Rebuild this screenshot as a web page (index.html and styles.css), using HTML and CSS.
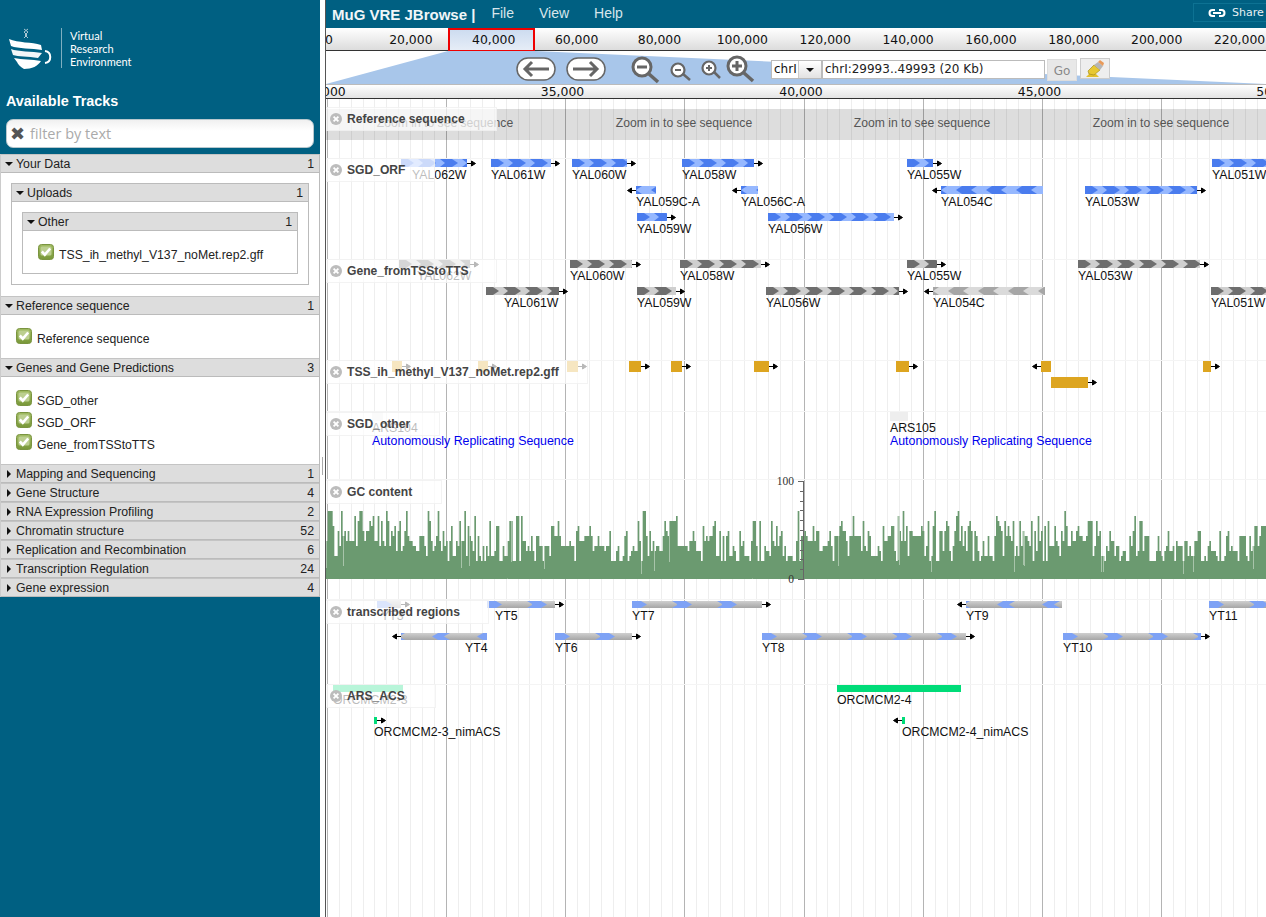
FILE: index.html
```html
<!DOCTYPE html>
<html lang="en">

<head>
    <meta charset="UTF-8" />
    <title>MuG VRE JBrowse</title>
    <link rel="stylesheet" href="styles.css">
</head>

<body>
    <svg class="defs" width="0" height="0">
        <defs>
            <pattern id="orf-r" patternUnits="userSpaceOnUse" width="22" height="8">
                <rect width="22" height="8" fill="#96b8ff" />
                <path d="M0 0H7L13 4 7 8H0ZM17 0H22V8H17L22 4Z" fill="#4a7cee" />
            </pattern>
            <pattern id="orf-l" patternUnits="userSpaceOnUse" width="30" height="8">
                <rect width="30" height="8" fill="#96b8ff" />
                <path d="M21 0L15 4 21 8H30V0ZM0 0H6L0 4 6 8H0Z" fill="#4a7cee" />
            </pattern>
            <pattern id="gene-r" patternUnits="userSpaceOnUse" width="22" height="8">
                <rect width="22" height="8" fill="#cfcfcf" />
                <path d="M0 0H7L13 4 7 8H0ZM17 0H22V8H17L22 4Z" fill="#6e6e6e" />
            </pattern>
            <pattern id="gene-l" patternUnits="userSpaceOnUse" width="30" height="8">
                <rect width="30" height="8" fill="#dadada" />
                <path d="M21 0L15 4 21 8H30V0ZM0 0H6L0 4 6 8H0Z" fill="#a6a6a6" />
            </pattern>
            <linearGradient id="tr-grey" x1="0" y1="0" x2="0" y2="1">
                <stop offset="0" stop-color="#cfcfcf" />
                <stop offset="1" stop-color="#a6a6a6" />
            </linearGradient>
            <pattern id="tr-r" patternUnits="userSpaceOnUse" width="45" height="7">
                <path d="M0 0H9L15 3.5 9 7H0ZM40 0H45V2.900ZM40 7H45V4.100Z" fill="#7ea2f5" />
            </pattern>
            <pattern id="tr-l" patternUnits="userSpaceOnUse" width="45" height="7">
                <path d="M37 0L31 3.500 37 7H45V4.670L43 3.500 45 2.330V0ZM0 0H4L0 2.330ZM0 7H4L0 4.670Z" fill="#7ea2f5" />
            </pattern>
            <linearGradient id="check-green" x1="0" y1="0" x2="0" y2="1">
                <stop offset="0" stop-color="#a2bc64" />
                <stop offset="1" stop-color="#789738" />
            </linearGradient>
            <symbol id="check" viewBox="0 0 16 16">
                <rect x="0.500" y="0.500" width="15" height="15" rx="3" fill="url(#check-green)" stroke="#7a9440" />
                <rect x="2.500" y="2.500" width="11" height="9" rx="1.500" fill="#bccf90" />
                <path d="M3.800 7.500l3 3.200 5.400-6.200" fill="none" stroke="#fff" stroke-width="2.600" />
            </symbol>
            <symbol id="close" viewBox="0 0 12 12">
                <circle cx="6" cy="6" r="6" fill="#bcbcbc" />
                <path d="M3.600 3.600l4.800 4.800M8.400 3.600l-4.800 4.800" stroke="#fff" stroke-width="1.800" />
            </symbol>
        </defs>
    </svg>

    <div class="page">
        <aside class="sidebar">
            <div class="logo">
                <svg class="logo-mark" width="46" height="44" viewBox="0 0 46 44">
                    <path d="M1 11C10 15 24 14 33 17L34 22C24 20 10 21 3 18Z" fill="#fff" />
                    <path d="M3 21C10 24 24 23 34 25L30 30C20 28 10 29 5 27Z" fill="#f2f6f8" />
                    <path d="M6 30C14 32 24 31 33 33 30 38 24 41 16 41 12 39 10 36 9 34Z" fill="#fff" />
                    <path d="M37 23C44 24 44 34 37 35" fill="none" stroke="#fff" stroke-width="2" />
                    <path d="M16 1l4 3-3 3 3 3M20 1l-4 3 3 3-3 3" fill="none" stroke="#a9c6d2" stroke-width="1" />
                </svg>
                <span class="logo-rule"></span>
                <div class="logo-text">Virtual<br>Research<br>Environment</div>
            </div>
            <h2 class="tracks-title">Available Tracks</h2>
            <div class="filter">
                <span class="filter-x">✖</span>
                <span class="filter-text">filter by text</span>
            </div>

            <div class="cat">
                <div class="cat-head"><i class="tri down"></i><span>Your Data</span><b>1</b></div>
                <div class="cat-body nested outer">
                    <div class="cat boxed">
                        <div class="cat-head"><i class="tri down"></i><span>Uploads</span><b>1</b></div>
                        <div class="cat-body nested">
                            <div class="cat boxed">
                                <div class="cat-head"><i class="tri down"></i><span>Other</span><b>1</b></div>
                                <div class="cat-body items deep">
                                    <label class="item"><svg width="16" height="16"><use href="#check" /></svg><span class="long">TSS_ih_methyl_V137_noMet.rep2.gff</span></label>
                                </div>
                            </div>
                        </div>
                    </div>
                </div>
            </div>
            <div class="cat">
                <div class="cat-head"><i class="tri down"></i><span>Reference sequence</span><b>1</b></div>
                <div class="cat-body items">
                    <label class="item"><svg width="16" height="16"><use href="#check" /></svg><span>Reference sequence</span></label>
                </div>
            </div>
            <div class="cat">
                <div class="cat-head"><i class="tri down"></i><span>Genes and Gene Predictions</span><b>3</b></div>
                <div class="cat-body items">
                    <label class="item"><svg width="16" height="16"><use href="#check" /></svg><span>SGD_other</span></label>
                    <label class="item"><svg width="16" height="16"><use href="#check" /></svg><span>SGD_ORF</span></label>
                    <label class="item"><svg width="16" height="16"><use href="#check" /></svg><span>Gene_fromTSStoTTS</span></label>
                </div>
            </div>
            <div class="cat"><div class="cat-head"><i class="tri right"></i><span>Mapping and Sequencing</span><b>1</b></div></div>
            <div class="cat"><div class="cat-head"><i class="tri right"></i><span>Gene Structure</span><b>4</b></div></div>
            <div class="cat"><div class="cat-head"><i class="tri right"></i><span>RNA Expression Profiling</span><b>2</b></div></div>
            <div class="cat"><div class="cat-head"><i class="tri right"></i><span>Chromatin structure</span><b>52</b></div></div>
            <div class="cat"><div class="cat-head"><i class="tri right"></i><span>Replication and Recombination</span><b>6</b></div></div>
            <div class="cat"><div class="cat-head"><i class="tri right"></i><span>Transcription Regulation</span><b>24</b></div></div>
            <div class="cat"><div class="cat-head"><i class="tri right"></i><span>Gene expression</span><b>4</b></div></div>
        </aside>

        <div class="splitter"><span class="grip"></span></div>

        <main class="main">
            <header class="menubar">
                <span class="brand">MuG VRE JBrowse |</span>
                <nav class="menu">
                    <span>File</span>
                    <span>View</span>
                    <span>Help</span>
                </nav>
                <div class="share">
                    <svg width="18" height="10" viewBox="0 0 18 10">
                        <path d="M7 2H4.500a3 3 0 0 0 0 6H7M11 2h2.500a3 3 0 0 1 0 6H11M5 5h8" fill="none" stroke="#fff" stroke-width="2" />
                    </svg>
                    <span>Share</span>
                </div>
            </header>

            <div class="overview">
                <div class="overview-scale" id="overviewScale"></div>
                <div class="overview-pos"></div>
            </div>

            <div class="navbar">
                <svg class="trapezoid" width="940" height="33">
                    <polygon points="0,33 122,0 209,0 940,33" fill="#a8c6ea" />
                </svg>
                <svg class="nav-arrow" width="40" height="24" viewBox="0 0 40 24">
                    <rect x="1" y="1" width="38" height="22" rx="11" fill="#fff" stroke="#666" stroke-width="1.500" />
                    <path d="M33 12H9M16 5l-7 7 7 7" fill="none" stroke="#666" stroke-width="3" />
                </svg>
                <svg class="nav-arrow next" width="40" height="24" viewBox="0 0 40 24">
                    <rect x="1" y="1" width="38" height="22" rx="11" fill="#fff" stroke="#666" stroke-width="1.500" />
                    <path d="M7 12H31M24 5l7 7-7 7" fill="none" stroke="#666" stroke-width="3" />
                </svg>
                <svg class="zoom-big-out" width="29" height="28" viewBox="0 0 29 28">
                    <circle cx="11" cy="11" r="9" fill="#fff" stroke="#666" stroke-width="3" />
                    <path d="M18 18l9 8" stroke="#666" stroke-width="3.500" />
                    <path d="M6 11h10" stroke="#666" stroke-width="3" />
                </svg>
                <svg class="zoom-small-out" width="21" height="19" viewBox="0 0 21 19">
                    <circle cx="8" cy="8" r="6.500" fill="#fff" stroke="#666" stroke-width="2.200" />
                    <path d="M13 12l7 6" stroke="#666" stroke-width="2.500" />
                    <path d="M5 8h6" stroke="#666" stroke-width="2" />
                </svg>
                <svg class="zoom-small-in" width="20" height="19" viewBox="0 0 20 19">
                    <circle cx="8" cy="8" r="6.500" fill="#fff" stroke="#666" stroke-width="2.200" />
                    <path d="M13 12l6 6" stroke="#666" stroke-width="2.500" />
                    <path d="M5 8h6M8 5v6" stroke="#666" stroke-width="2" />
                </svg>
                <svg class="zoom-big-in" width="29" height="28" viewBox="0 0 29 28">
                    <circle cx="11" cy="11" r="9" fill="#fff" stroke="#666" stroke-width="3" />
                    <path d="M18 18l9 8" stroke="#666" stroke-width="3.500" />
                    <path d="M6 11h10M11 6v10" stroke="#666" stroke-width="3" />
                </svg>
                <div class="chrom">
                    <span class="chrom-name">chrI</span>
                    <span class="chrom-drop"><i class="tri down"></i></span>
                </div>
                <div class="location">chrI:29993..49993 (20 Kb)</div>
                <div class="go">Go</div>
                <div class="highlight">
                    <svg width="22" height="18" viewBox="0 0 22 18">
                        <path d="M2 17h13l-3-3H5z" fill="#e3c02c" />
                        <path d="M5 14l-1-3 6-6 6 5-6 5z" fill="#e8c832" stroke="#a88f1c" stroke-width="0.700" />
                        <path d="M10 5l4-3 5 4-3 4z" fill="#b5b5b5" />
                        <path d="M14 2l2-2 4 3-1 3z" fill="#e89a5a" />
                    </svg>
                </div>
            </div>

            <div class="detail-scale" id="detailScale"></div>

            <div class="tracks" id="tracks"></div>
        </main>
    </div>

    <script src="script.js"></script>
</body>

</html>
```

FILE: styles.css
```css
*,
::after,
::before {
    box-sizing: border-box;
    padding: 0;
    margin: 0;
}

body {
    width: 100vw;
    height: 100vh;
    overflow: hidden;
    background-color: white;
    font-family: "Liberation Sans", Arial, sans-serif;
    font-size: 12px;
    color: #111;
}

.defs {
    position: absolute;
}

.page {
    display: flex;
    height: 917px;
}

/* left panel */

.sidebar {
    width: 320px;
    flex: none;
    background-color: #006082;
}

.logo {
    display: flex;
    align-items: flex-start;
    height: 91px;
    padding: 27px 0 0 8px;
}

.logo-mark {
    margin-top: 1px;
}

.logo-rule {
    width: 1px;
    height: 40px;
    margin: 1px 0 0 7px;
    background-color: #7fafc0;
}

.logo-text {
    margin: 2px 0 0 8px;
    font-family: Lato, sans-serif;
    font-size: 11px;
    line-height: 13px;
    color: white;
}

.tracks-title {
    height: 28px;
    padding: 2px 0 0 6px;
    font-size: 14.400px;
    line-height: 17px;
    color: white;
}

.filter {
    display: flex;
    align-items: center;
    height: 29px;
    margin: 0 6px;
    padding-left: 3px;
    border: 1px solid #b8c8ce;
    border-radius: 7px;
    background: linear-gradient(#f0f0f0, #fff 40%);
}

.filter-x {
    width: 20px;
    font-family: "DejaVu Sans", sans-serif;
    font-size: 18px;
    line-height: 18px;
    color: #555;
}

.filter-text {
    font-family: "Open Sans", sans-serif;
    font-size: 14.500px;
    color: #aaa;
}

.cat {
    background-color: white;
    border-right: 1px solid #bbb;
    border-left: 1px solid #ccc;
}

.filter + .cat {
    margin-top: 6px;
}

.cat-head {
    display: flex;
    align-items: center;
    height: 19px;
    padding: 0 5px 0 4px;
    background-color: #ddd;
    border-top: 1px solid #c4c4c4;
    border-bottom: 1px solid #bbb;
    font-size: 12.300px;
}

.cat-head span {
    flex: 1;
    margin-left: 3px;
    color: #222;
}

.cat-head b {
    font-weight: normal;
    color: #222;
}

.tri {
    display: inline-block;
    width: 0;
    height: 0;
    flex: none;
}

.tri.down {
    border-top: 4px solid #111;
    border-right: 4px solid transparent;
    border-left: 4px solid transparent;
}

.tri.right {
    margin-left: 2px;
    margin-right: 2px;
    border-top: 4px solid transparent;
    border-bottom: 4px solid transparent;
    border-left: 4px solid #111;
}

.cat-body.nested {
    padding: 10px;
}

.cat-body.nested.outer {
    padding-bottom: 11px;
}

.cat.boxed {
    border: 1px solid #bbb;
}

.cat.boxed > .cat-head {
    height: 18px;
    border-top: 0;
}

.cat-body.items {
    display: flex;
    flex-direction: column;
    gap: 6px;
    padding: 13px 0 14px 15px;
}

.cat-body.items.deep {
    padding: 13px 0 13px 15px;
}

.item {
    display: flex;
    align-items: flex-start;
    height: 16px;
    font-size: 12.200px;
    color: #222;
}

.item span {
    margin: 4px 0 0 5px;
}

.item .long {
    font-size: 12.250px;
}

.splitter {
    position: relative;
    width: 6px;
    flex: none;
    border-right: 1px solid #555;
}

.grip {
    position: absolute;
    top: 457px;
    left: 2px;
    width: 1px;
    height: 18px;
    background-color: #aaa;
}

/* main view */

.main {
    position: relative;
    flex: 1;
    min-width: 0;
    overflow: hidden;
}

.menubar {
    display: flex;
    align-items: center;
    height: 28px;
    background-color: #006082;
    color: white;
}

.brand {
    margin-left: 6px;
    font-size: 15px;
    font-weight: bold;
    color: #f0f6f8;
}

.menu {
    display: flex;
    gap: 25px;
    margin-left: 16px;
    margin-top: -2px;
    font-size: 14px;
    color: #d8e6ec;
}

.share {
    display: flex;
    align-items: center;
    gap: 6px;
    height: 19px;
    margin: -3px -1px 0 auto;
    padding-left: 14px;
    width: 74px;
    border: 1px solid #0d7293;
    font-family: "DejaVu Sans", sans-serif;
    font-size: 11px;
    white-space: nowrap;
    color: #e8f0f3;
}

.overview {
    position: relative;
    height: 23px;
    background: linear-gradient(white, #dcdcdc);
    border-bottom: 1px solid #333;
}

.overview-scale {
    position: relative;
    z-index: 1;
    display: flex;
    height: 22px;
    margin-left: -37.400px;
    white-space: nowrap;
}

.overview-scale span {
    width: 82.880px;
    flex: none;
    font-family: "DejaVu Sans", sans-serif;
    font-size: 12.400px;
    line-height: 23px;
    text-align: center;
    color: #111;
}

.overview-scale span:first-child {
    width: 80.800px;
}

.overview-pos {
    position: absolute;
    top: 0;
    left: 122px;
    width: 87px;
    height: 24px;
    border: 2px solid #e00;
    background: linear-gradient(#cddcf0, #e6edf7);
}

.navbar {
    position: relative;
    display: flex;
    align-items: flex-start;
    height: 33px;
}

.trapezoid {
    position: absolute;
    top: 0;
    left: 0;
}

.navbar > *:not(.trapezoid) {
    position: relative;
}

.nav-arrow {
    margin: 6px 0 0 190px;
}

.nav-arrow.next {
    margin-left: 10px;
}

.zoom-big-out {
    margin: 5px 0 0 25px;
}

.zoom-small-out {
    margin: 11px 0 0 10px;
}

.zoom-small-in {
    margin: 9px 0 0 10px;
}

.zoom-big-in {
    margin: 4px 0 0 5px;
}

.chrom {
    display: flex;
    height: 19px;
    margin: 9px 0 0 16px;
    background-color: white;
    border: 1px solid #bbb;
    font-family: "DejaVu Sans", sans-serif;
}

.chrom-name {
    width: 27px;
    padding-left: 2px;
    line-height: 17px;
    border-right: 1px solid #ccc;
}

.chrom-drop {
    display: flex;
    align-items: center;
    justify-content: center;
    width: 22px;
    background: linear-gradient(white, #e2e2e2);
}

.location {
    width: 223px;
    height: 19px;
    margin: 9px 0 0 0;
    padding-left: 2px;
    background-color: white;
    border: 1px solid #bbb;
    font-family: "DejaVu Sans", sans-serif;
    line-height: 16px;
    color: #222;
}

.go {
    width: 30px;
    height: 22px;
    margin: 8px 0 0 2px;
    background-color: #e8e8e8;
    border: 1px solid #ddd;
    font-family: "DejaVu Sans", sans-serif;
    line-height: 22px;
    text-align: center;
    color: #888;
}

.highlight {
    display: flex;
    align-items: center;
    justify-content: center;
    width: 30px;
    height: 21px;
    margin: 7px 0 0 3px;
    background-color: #eee;
    border: 1px solid #ccc;
}

.detail-scale {
    display: flex;
    height: 15px;
    margin-left: -121.250px;
    background: linear-gradient(white, #e4e4e4);
    border-top: 1px solid #bbb;
    border-bottom: 1px solid #333;
    white-space: nowrap;
}

.detail-scale span {
    width: 238.500px;
    flex: none;
    font-family: "DejaVu Sans", sans-serif;
    font-size: 12.400px;
    line-height: 13px;
    text-align: center;
    color: #111;
}

/* tracks */

.tracks {
    position: relative;
    height: 818px;
    overflow: hidden;
}

.grid-line {
    position: absolute;
    top: 0;
    bottom: 0;
    width: 1px;
    background-color: #eee;
}

.grid-line.major {
    background-color: #b4b4b4;
}

.seq-band {
    position: absolute;
    top: 10px;
    left: 0;
    right: 0;
    height: 31px;
    background-color: rgba(0, 0, 0, 0.133);
}

.seq-text {
    position: absolute;
    width: 238px;
    text-align: center;
    font-size: 12.150px;
    color: #555;
}

.divider {
    position: absolute;
    left: 0;
    right: 0;
    height: 1px;
    background-color: #f4f4f4;
}

.bar {
    position: absolute;
    display: block;
}

.strand {
    position: absolute;
    display: block;
}

.flabel {
    position: absolute;
    font-size: 12.300px;
    line-height: 14px;
    white-space: nowrap;
    color: #111;
}

.fdesc {
    position: absolute;
    font-size: 12.350px;
    line-height: 14px;
    white-space: nowrap;
    color: #00e;
}

.track-label {
    position: absolute;
    left: 0;
    display: flex;
    align-items: flex-start;
    gap: 5px;
    height: 24px;
    padding: 5px 0 0 4px;
    background-color: rgba(255, 255, 255, 0.72);
    border: 1px solid rgba(235, 235, 235, 0.6);
    border-left: 0;
    font-size: 12.100px;
    font-weight: bold;
    line-height: 12px;
    white-space: nowrap;
    color: #444;
}

.gc-plot {
    position: absolute;
    left: 0;
}

.gc-axis {
    position: absolute;
}

.gc-num {
    position: absolute;
    width: 30px;
    font-family: "Liberation Serif", serif;
    font-size: 11.500px;
    line-height: 12px;
    text-align: right;
    color: #333;
}
```

FILE: script.js
```js
// everything is placed from page coordinates, the canvas starts here
let originX = 326;
let originY = 99;
let tracks = document.getElementById( "tracks" );

let overviewNums = [ "0", "20,000", "40,000", "60,000", "80,000", "100,000", "120,000", "140,000", "160,000", "180,000", "200,000", "220,000" ];
overviewNums.forEach( ( x ) => {
    let s = document.createElement( "span" );
    s.textContent = x;
    document.getElementById( "overviewScale" ).appendChild( s );
} );

[ "30,000", "35,000", "40,000", "45,000", "50,000" ].forEach( ( x ) => {
    let s = document.createElement( "span" );
    s.textContent = x;
    document.getElementById( "detailScale" ).appendChild( s );
} );

let add = ( cls, left, top, text ) => {
    let el = document.createElement( "div" );
    el.className = cls;
    el.style.left = ( left - originX ) + "px";
    el.style.top = ( top - originY ) + "px";
    if ( text ) el.textContent = text;
    tracks.appendChild( el );
    return el;
};

// grid, 11.92px between the thin lines
for ( let i = -10; i < 90; i++ ) {
    let x = Math.round( 446 + i * 11.92 );
    if ( x < originX ) continue;
    let el = add( i % 10 === 0 ? "grid-line major" : "grid-line", x, originY );
    el.style.top = "0";
}

let band = document.createElement( "div" );
band.className = "seq-band";
tracks.appendChild( band );

[ 445, 684, 922, 1161 ].forEach( ( c ) => add( "seq-text", c - 119, 116, "Zoom in to see sequence" ) );

[ 158, 259, 360, 411, 479, 599, 684 ].forEach( ( y ) => add( "divider", originX, y ) );

let svgNS = "http://www.w3.org/2000/svg";

let arrow = ( x, y, dir ) => {
    let s = document.createElementNS( svgNS, "svg" );
    s.setAttribute( "class", "strand" );
    s.setAttribute( "width", 9 );
    s.setAttribute( "height", 7 );
    s.style.left = ( x - originX ) + "px";
    s.style.top = ( y - 3.5 - originY ) + "px";
    let d = dir > 0 ? "M0 3.500H6M4.500 1L8.500 3.500 4.500 6Z" : "M9 3.500H3M4.500 1L.5 3.500 4.500 6Z";
    s.innerHTML = '<path d="' + d + '" stroke="#000" stroke-width="1" fill="#000"/>';
    tracks.appendChild( s );
};

let bar = ( x1, x2, y, h, fill, extra ) => {
    let s = document.createElementNS( svgNS, "svg" );
    s.setAttribute( "class", "bar" );
    s.setAttribute( "width", x2 - x1 );
    s.setAttribute( "height", h );
    s.style.left = ( x1 - originX ) + "px";
    s.style.top = ( y - originY ) + "px";
    let out = '<rect width="' + ( x2 - x1 ) + '" height="' + h + '" fill="' + fill + '"/>';
    if ( extra ) out += '<rect width="' + ( x2 - x1 ) + '" height="' + h + '" fill="' + extra + '"/>';
    s.innerHTML = out;
    tracks.appendChild( s );
};

let feature = ( f, y, h, fill, extra, labelY ) => {
    bar( f[ 0 ], f[ 1 ], y, h, fill, extra );
    let dir = f[ 2 ];
    if ( dir > 0 ) arrow( f[ 1 ], y + h / 2, 1 );
    if ( dir < 0 ) arrow( f[ 0 ] - 9, y + h / 2, -1 );
    if ( f[ 3 ] ) add( "flabel", f[ 4 ], labelY, f[ 3 ] );
};

// x1, x2, strand, name, label x
let orfRows = [
    [ 159, [ [ 401, 467, 1, "YAL062W", 412 ], [ 491, 551, 1, "YAL061W", 491 ], [ 572, 627, 1, "YAL060W", 572 ], [ 682, 754, 1, "YAL058W", 682 ], [ 907, 933, 1, "YAL055W", 907 ], [ 1212, 1290, 1, "YAL051W", 1212 ] ] ],
    [ 186, [ [ 636, 656, -1, "YAL059C-A", 636 ], [ 741, 758, -1, "YAL056C-A", 741 ], [ 941, 1043, -1, "YAL054C", 941 ], [ 1085, 1197, 1, "YAL053W", 1085 ] ] ],
    [ 213, [ [ 637, 667, 1, "YAL059W", 637 ], [ 768, 894, 1, "YAL056W", 768 ] ] ]
];
orfRows.forEach( ( row ) => row[ 1 ].forEach( ( f ) => {
    feature( f, row[ 0 ], 8, f[ 2 ] > 0 ? "url(#orf-r)" : "url(#orf-l)", null, row[ 0 ] + 9 );
} ) );

let geneRows = [
    [ 260, [ [ 399, 470, 1, "YAL062W", 417 ], [ 570, 632, 1, "YAL060W", 570 ], [ 680, 761, 1, "YAL058W", 680 ], [ 907, 937, 1, "YAL055W", 907 ], [ 1078, 1200, 1, "YAL053W", 1078 ] ] ],
    [ 287, [ [ 486, 559, 1, "YAL061W", 504 ], [ 637, 676, 1, "YAL059W", 637 ], [ 766, 899, 1, "YAL056W", 766 ], [ 933, 1045, -1, "YAL054C", 933 ], [ 1211, 1290, 1, "YAL051W", 1211 ] ] ]
];
geneRows.forEach( ( row ) => row[ 1 ].forEach( ( f ) => {
    feature( f, row[ 0 ], 8, f[ 2 ] > 0 ? "url(#gene-r)" : "url(#gene-l)", null, row[ 0 ] + 9 );
} ) );

[ [ 392, 402, 1 ], [ 478, 488, 1 ], [ 567, 578, 1 ], [ 629, 641, 1 ], [ 671, 682, 1 ], [ 754, 769, 1 ], [ 896, 909, 1 ], [ 1041, 1051, -1 ], [ 1203, 1211, 1 ] ].forEach( ( f ) => {
    feature( f, 361, 11, "#dda520" );
} );
feature( [ 1051, 1088, 1 ], 377, 11, "#dda520" );

bar( 372, 383, 412, 9, "#eee" );
bar( 890, 908, 412, 9, "#eee" );
add( "flabel", 372, 421, "ARS104" );
add( "flabel", 890, 421, "ARS105" );
add( "fdesc", 372, 434, "Autonomously Replicating Sequence" );
add( "fdesc", 890, 434, "Autonomously Replicating Sequence" );

// GC histogram, value steps of 5px like the real bins
let seed = 137;
let rnd = () => {
    seed = ( seed * 16807 ) % 2147483647;
    return seed / 2147483647;
};
let gcPath = "";
let hairs = "";
let steps = 8;
let binW = 5 / 3;
for ( let i = 0; i < 570; i++ ) {
    let x = i * binW;
    let wave = 0.7 * Math.sin( x / 37 ) + 0.7 * Math.sin( x / 83 + 1 );
    if ( rnd() > 0.15 ) {
        steps = Math.round( 8 + wave + ( rnd() + rnd() + rnd() - 1.5 ) * 5.5 );
        if ( steps < 4 ) steps = 4;
        if ( steps > 14 ) steps = 14;
    }
    let h = steps * 5 - 2;
    gcPath += "M" + x.toFixed( 2 ) + " " + ( 100 - h ) + "h" + binW.toFixed( 2 ) + "v" + h + "h-" + binW.toFixed( 2 ) + "z";
    if ( rnd() < 0.04 ) hairs += "M" + Math.round( x ) + ".5 " + ( 100 - h ) + "v" + Math.round( h * 0.7 );
}
let gc = document.createElementNS( svgNS, "svg" );
gc.setAttribute( "class", "gc-plot" );
gc.setAttribute( "width", 950 );
gc.setAttribute( "height", 100 );
gc.style.top = ( 479 - originY ) + "px";
gc.innerHTML = '<path d="' + gcPath + '" fill="#6b9a70"/><path d="' + hairs + '" stroke="#a8c4aa" stroke-width="1"/>';
tracks.appendChild( gc );

let ax = document.createElementNS( svgNS, "svg" );
ax.setAttribute( "class", "gc-axis" );
ax.setAttribute( "width", 8 );
ax.setAttribute( "height", 102 );
ax.style.left = ( 797 - originX ) + "px";
ax.style.top = ( 480 - originY ) + "px";
let ticks = "M6.500 1V99";
for ( let i = 0; i <= 10; i++ ) {
    let y = Math.round( 1 + i * 9.8 );
    ticks += "M" + ( i % 10 === 0 ? 1 : 3 ) + " " + ( y + 0.5 ) + "H7";
}
ax.innerHTML = '<path d="' + ticks + '" stroke="#666" stroke-width="1" fill="none"/>';
tracks.appendChild( ax );
add( "gc-num", 764, 475, "100" );
add( "gc-num", 764, 573, "0" );

let trRows = [
    [ 601, [ [ 377, 401, 1, "YT3", 381 ], [ 487, 555, 1, "YT5", 495 ], [ 632, 762, 1, "YT7", 632 ], [ 966, 1062, -1, "YT9", 966 ], [ 1209, 1290, 1, "YT11", 1209 ] ] ],
    [ 633, [ [ 401, 487, -1, "YT4", 465 ], [ 555, 632, 1, "YT6", 555 ], [ 762, 966, 1, "YT8", 762 ], [ 1063, 1201, 1, "YT10", 1063 ] ] ]
];
trRows.forEach( ( row ) => row[ 1 ].forEach( ( f ) => {
    feature( f, row[ 0 ], 7, "url(#tr-grey)", f[ 2 ] > 0 ? "url(#tr-r)" : "url(#tr-l)", row[ 0 ] + 8 );
} ) );

feature( [ 333, 403, 0, "ORCMCM2-3", 333 ], 685, 7, "#00dc78", null, 693 );
feature( [ 837, 961, 0, "ORCMCM2-4", 837 ], 685, 7, "#00dc78", null, 693 );
feature( [ 374, 377, 1, "ORCMCM2-3_nimACS", 374 ], 717, 7, "#00dc78", null, 725 );
feature( [ 902, 905, -1, "ORCMCM2-4_nimACS", 902 ], 717, 7, "#00dc78", null, 725 );

// floating labels go last so they sit over the features
let labels = [
    [ "Reference sequence", 107, 171 ],
    [ "SGD_ORF", 158, 109 ],
    [ "Gene_fromTSStoTTS", 259, 171 ],
    [ "TSS_ih_methyl_V137_noMet.rep2.gff", 360, 262 ],
    [ "SGD_other", 412, 114 ],
    [ "GC content", 480, 116 ],
    [ "transcribed regions", 600, 163 ],
    [ "ARS_ACS", 684, 110 ]
];
labels.forEach( ( l ) => {
    let el = add( "track-label", originX, l[ 1 ] );
    el.style.width = l[ 2 ] + "px";
    el.innerHTML = '<svg width="12" height="12"><use href="#close"/></svg><span>' + l[ 0 ] + "</span>";
} );
```
